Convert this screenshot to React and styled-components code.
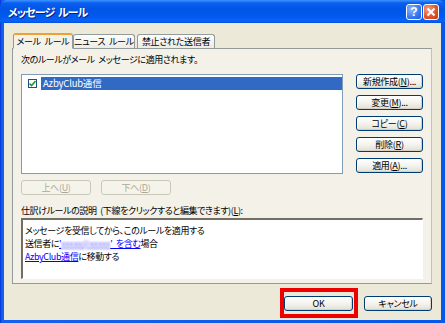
import React from 'react'
import styled, { createGlobalStyle } from 'styled-components'

const Global = createGlobalStyle`
  html, body {
    margin: 0;
    padding: 0;
    width: 445px;
    height: 323px;
    overflow: hidden;
  }
  body {
    font-family: "Noto Sans CJK JP", "Liberation Sans", sans-serif;
    font-size: 9px;
    font-feature-settings: "palt" 1;
    word-spacing: 2px;
  }
`

const Window = styled.div`
  width: 445px;
  height: 323px;
  box-sizing: border-box;
  display: flex;
  flex-direction: column;
  background: linear-gradient(to right, #0831d9 0, #1660f0 2px, #0758e8 100%);
  padding: 0 4px 3px 4px;
`

const TitleBar = styled.div`
  height: 23px;
  margin: 0 -4px;
  padding: 0 6px 0 8px;
  display: flex;
  align-items: center;
  background: linear-gradient(to bottom, #3d95ff 0, #0a5ff0 3px, #0055e5 9px, #0058ee 16px, #0a63f5 21px, #0050e0 23px);
  border-radius: 7px 7px 0 0;
`

const Title = styled.div`
  flex: 1;
  color: #fff;
  font-weight: bold;
  font-size: 11px;
  letter-spacing: -0.9px;
  text-shadow: 1px 1px 0 #0a1e8c;
`

const CapButton = styled.div`
  width: 16px;
  height: 16px;
  box-sizing: border-box;
  border: 1px solid #fff;
  border-radius: 3px;
  margin-left: 1px;
  display: flex;
  align-items: center;
  justify-content: center;
  color: #fff;
  font-weight: bold;
  font-size: 12px;
  font-family: "Liberation Sans", sans-serif;
  background: ${({ $close }) =>
    $close
      ? 'radial-gradient(circle at 30% 30%, #f3a184 0, #e0562c 55%, #c23a12 100%)'
      : 'radial-gradient(circle at 30% 30%, #8db6ff 0, #3b7cf4 55%, #1f56d8 100%)'};
`

const Body = styled.div`
  flex: 1;
  background: #ece9d8;
  display: flex;
  flex-direction: column;
  padding: 9px 9px 0 8px;
  position: relative;
`

const Tabs = styled.div`
  display: flex;
  align-items: flex-end;
  height: 16px;
  padding-left: 1px;
  position: relative;
  z-index: 1;
`

const Tab = styled.div`
  height: ${({ $active }) => ($active ? '16px' : '14px')};
  box-sizing: border-box;
  padding: 0 2px;
  margin-right: ${({ $active }) => ($active ? '0' : '2px')};
  width: ${({ $w }) => $w}px;
  display: flex;
  align-items: center;
  justify-content: center;
  border: 1px solid #919b9c;
  border-bottom: ${({ $active }) => ($active ? '1px solid #f3f1e8' : 'none')};
  border-top: ${({ $active }) => ($active ? '2px solid #f0a030' : '1px solid #919b9c')};
  border-radius: 3px 3px 0 0;
  background: ${({ $active }) =>
    $active ? '#f3f1e8' : 'linear-gradient(to bottom, #fdfdfb, #ecebe4)'};
  color: #000;
  letter-spacing: -0.3px;
  white-space: nowrap;
  margin-bottom: ${({ $active }) => ($active ? '-1px' : '0')};
`

const Panel = styled.div`
  height: 236px;
  box-sizing: border-box;
  border: 1px solid #919b9c;
  border-right-color: #c5c2b2;
  background: #f3f1e8;
  padding: 3px 8px 0 8px;
  display: flex;
  flex-direction: column;
`

const Label = styled.div`
  height: 15px;
  line-height: 15px;
  letter-spacing: -0.4px;
  white-space: nowrap;
`

const TopRow = styled.div`
  display: flex;
  gap: 13px;
  margin-top: 7px;
`

const ListBox = styled.div`
  width: 322px;
  height: 100px;
  box-sizing: border-box;
  border: 1px solid #7f9db9;
  background: #fff;
  padding-top: 2px;
`

const ListItem = styled.div`
  display: flex;
  align-items: center;
  height: 13px;
  padding-left: 6px;
  gap: 4px;
`

const Check = styled.div`
  width: 9px;
  height: 9px;
  box-sizing: border-box;
  border: 1px solid #1c5180;
  background: #fff;
  display: flex;
  align-items: center;
  justify-content: center;
`

const ItemText = styled.div`
  flex: 1;
  height: 13px;
  line-height: 13px;
  padding-left: 2px;
  background: ${({ $selected }) => ($selected ? '#316ac5' : 'transparent')};
  color: ${({ $selected }) => ($selected ? '#fff' : '#000')};
  font-size: 9.5px;
  letter-spacing: -0.2px;
`

const SideButtons = styled.div`
  display: flex;
  flex-direction: column;
  gap: 6px;
`

const Button = styled.div`
  width: ${({ $w }) => $w || 67}px;
  height: 15px;
  box-sizing: border-box;
  border: 1px solid ${({ $disabled }) => ($disabled ? '#c9c7ba' : '#003c74')};
  border-radius: 3px;
  background: ${({ $disabled }) =>
    $disabled
      ? '#f5f4ea'
      : 'linear-gradient(to bottom, #ffffff 0, #f4f3ee 50%, #e3e0d3 100%)'};
  box-shadow: ${({ $disabled }) =>
    $disabled ? 'none' : 'inset -1px -1px 0 #d6d0c5, inset 1px 1px 0 #fff'};
  color: ${({ $disabled }) => ($disabled ? '#aca899' : '#000')};
  display: flex;
  align-items: center;
  justify-content: center;
  letter-spacing: -0.3px;
  white-space: nowrap;
  position: relative;
`

const MoveRow = styled.div`
  display: flex;
  gap: 10px;
  margin-top: 6px;
`

const DescLabel = styled(Label)`
  margin-top: 8px;
`

const DescBox = styled.div`
  height: 61px;
  box-sizing: border-box;
  border-top: 2px solid #716f64;
  border-left: 2px solid #716f64;
  border-right: 1px solid #fff;
  border-bottom: 1px solid #fff;
  background: #fff;
  padding: 4px 0 0 2px;
  line-height: 13px;
  letter-spacing: -0.4px;
`

const Link = styled.span`
  color: #0000ff;
  text-decoration: underline;
`

const Blurred = styled.span`
  color: #7b7bff;
  text-decoration: underline;
  filter: blur(0.9px);
`

const Footer = styled.div`
  display: flex;
  justify-content: flex-end;
  gap: 11px;
  margin-top: 12px;
`

const Highlight = styled.div`
  position: absolute;
  top: -9px;
  bottom: -8px;
  left: -5px;
  right: -6px;
  border: 4px solid #ee0000;
  pointer-events: none;
`

export default function App() {
  return (
    <>
      <Global />
      <Window>
        <TitleBar>
          <Title>メッセージ ルール</Title>
          <CapButton>?</CapButton>
          <CapButton $close>
            <svg width="10" height="10" viewBox="0 0 10 10">
              <path d="M1.5 1.5 L8.5 8.5 M8.5 1.5 L1.5 8.5" stroke="#fff" strokeWidth="2" />
            </svg>
          </CapButton>
        </TitleBar>
        <Body>
          <Tabs>
            <Tab $active $w={60}>メール ルール</Tab>
            <Tab $w={62}>ニュース ルール</Tab>
            <Tab $w={78}>禁止された送信者</Tab>
          </Tabs>
          <Panel>
            <Label>次のルールがメール メッセージに適用されます。</Label>
            <TopRow>
              <ListBox>
                <ListItem>
                  <Check>
                    <svg width="7" height="7" viewBox="0 0 7 7">
                      <path d="M0.5 3.5 L2.5 5.5 L6.5 1" stroke="#21a121" strokeWidth="1.6" fill="none" />
                    </svg>
                  </Check>
                  <ItemText $selected>AzbyClub通信</ItemText>
                </ListItem>
              </ListBox>
              <SideButtons>
                <Button>新規作成(<u>N</u>)...</Button>
                <Button>変更(<u>M</u>)...</Button>
                <Button>コピー(<u>C</u>)</Button>
                <Button>削除(<u>R</u>)</Button>
                <Button>適用(<u>A</u>)...</Button>
              </SideButtons>
            </TopRow>
            <MoveRow>
              <Button $disabled $w={70}>上へ(<u>U</u>)</Button>
              <Button $disabled $w={70}>下へ(<u>D</u>)</Button>
            </MoveRow>
            <DescLabel>仕訳けルールの説明 (下線をクリックすると編集できます)(<u>L</u>):</DescLabel>
            <DescBox>
              <div>メッセージを受信してから、このルールを適用する</div>
              <div>
                送信者に<Link>'<Blurred>xxxxx@xxxxx</Blurred>' を含む</Link>場合
              </div>
              <div>
                <Link>AzbyClub通信</Link>に移動する
              </div>
            </DescBox>
          </Panel>
          <Footer>
            <Button $w={69}>
              OK
              <Highlight />
            </Button>
            <Button $w={68}>キャンセル</Button>
          </Footer>
        </Body>
      </Window>
    </>
  )
}
